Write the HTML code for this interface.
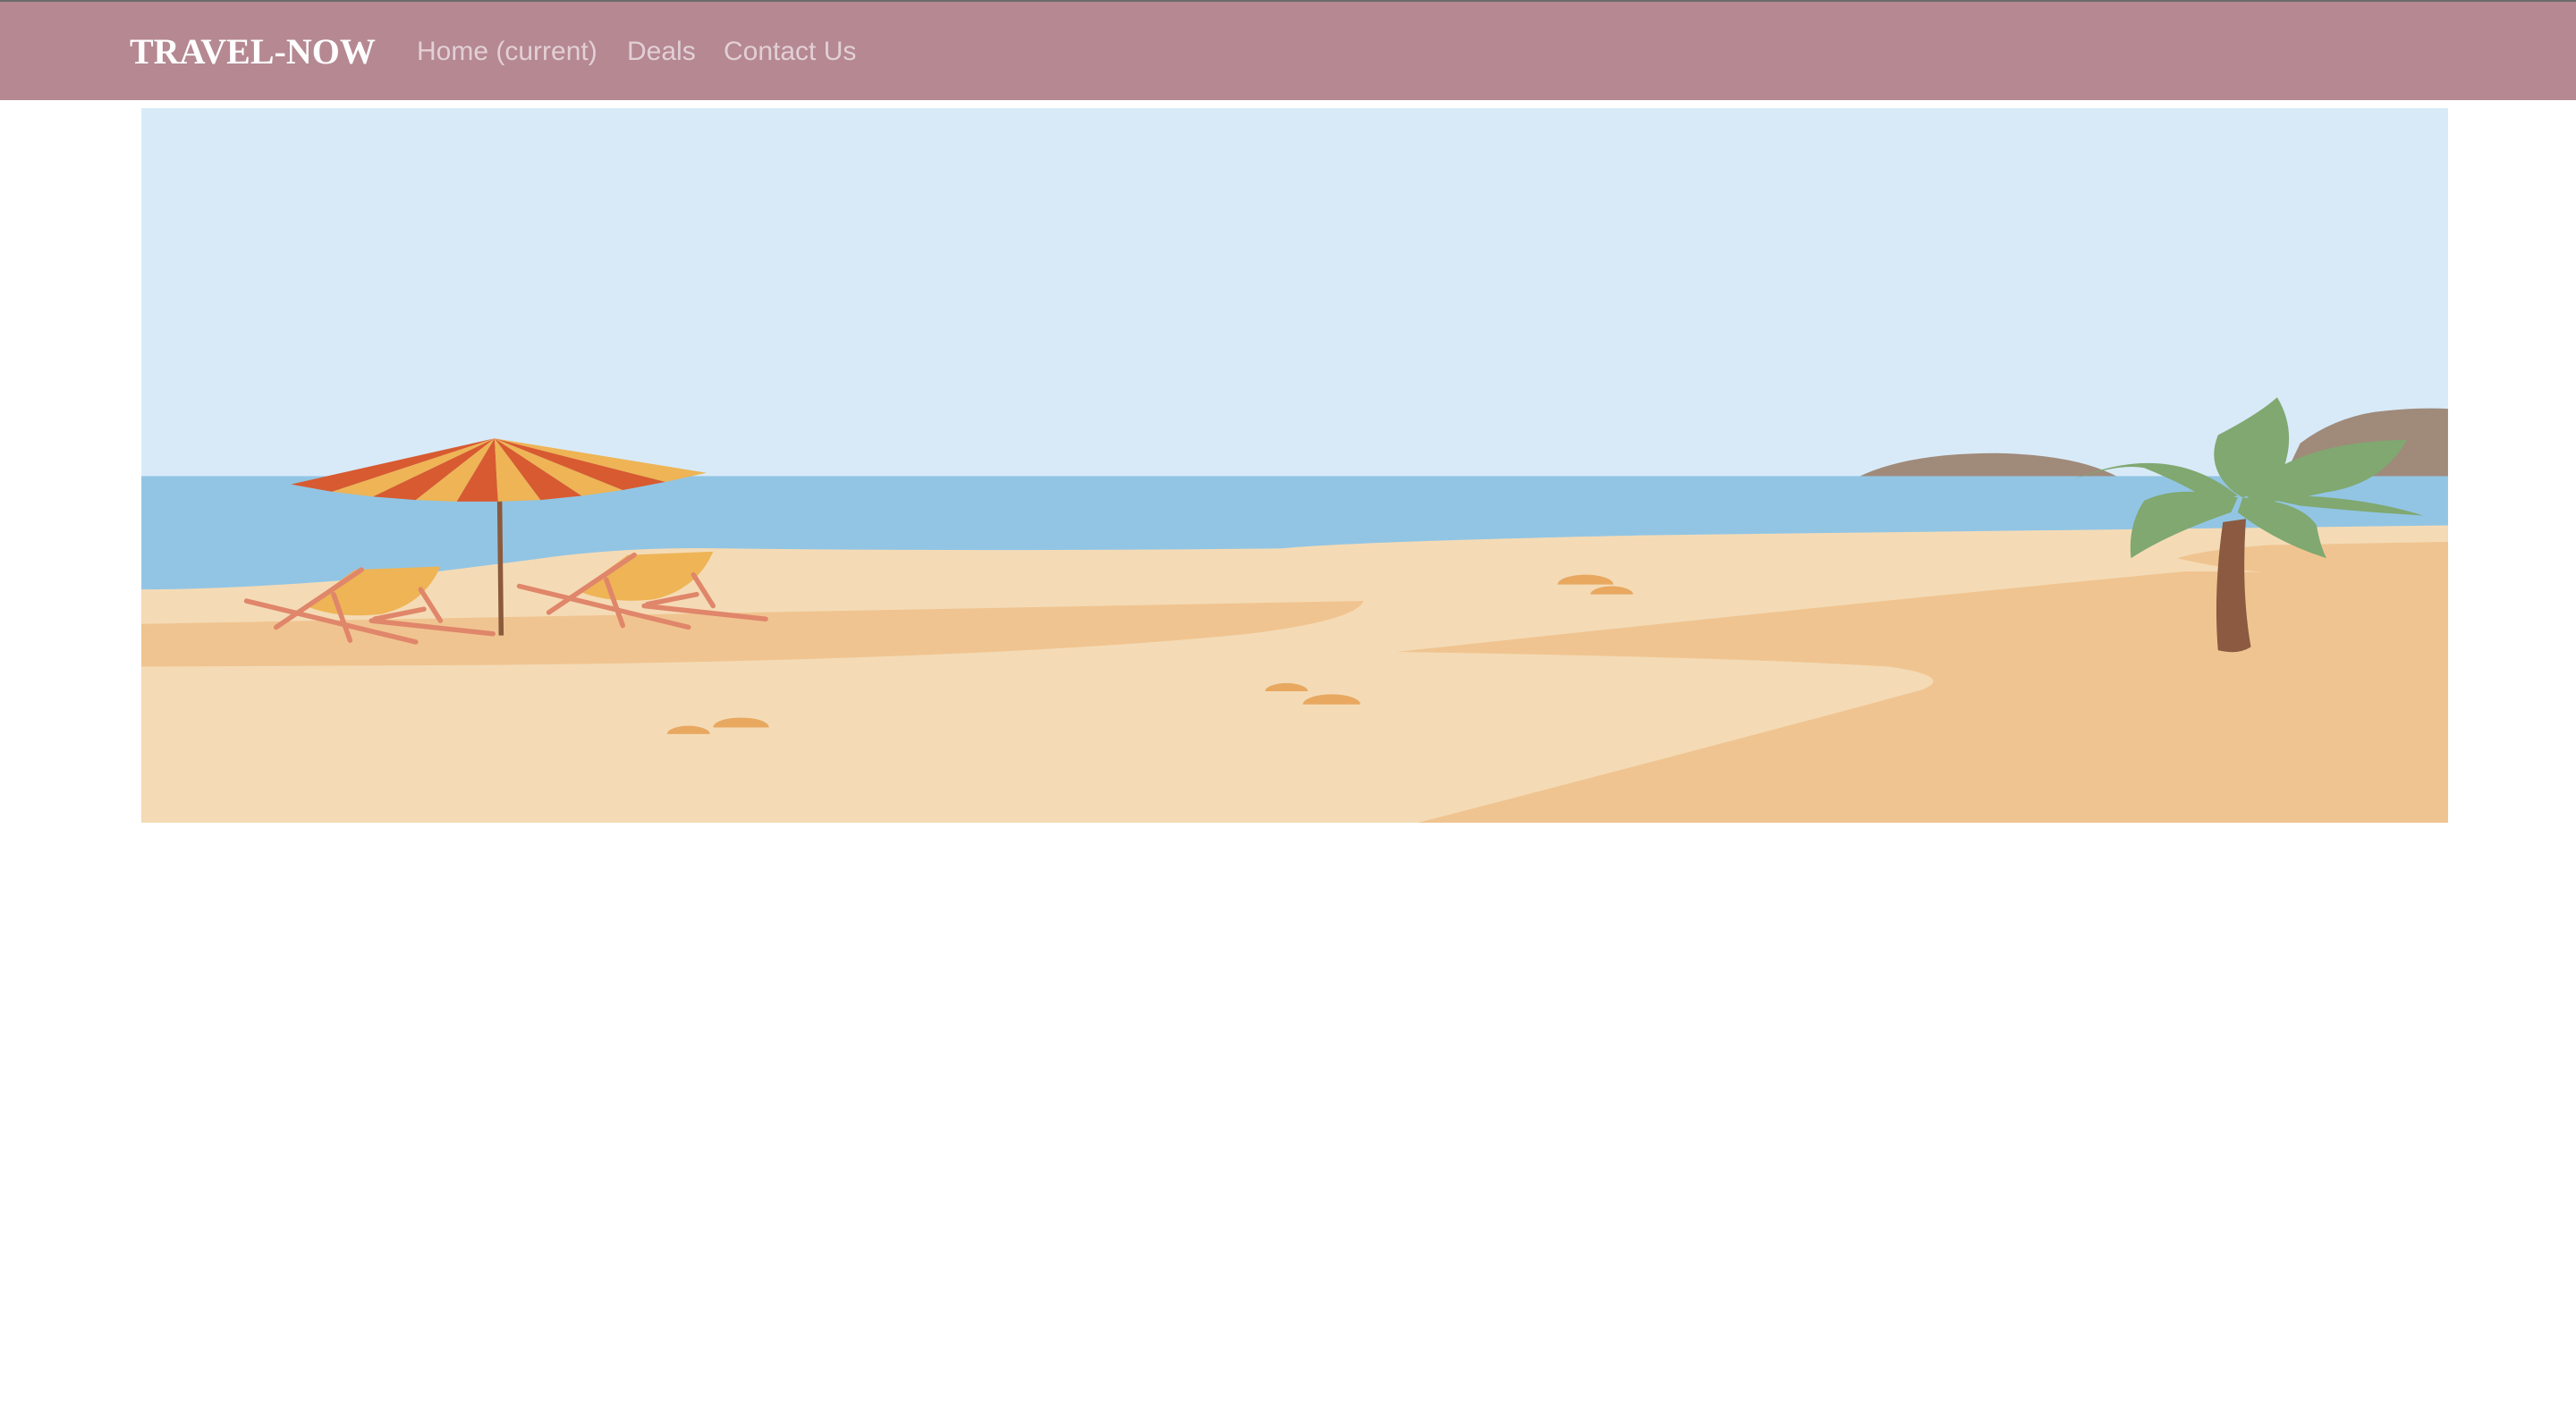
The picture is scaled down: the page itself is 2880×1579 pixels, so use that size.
<!DOCTYPE html>
<html><head><meta charset="utf-8"><style>
html,body{margin:0;padding:0;background:#fff;width:2880px;height:1579px;overflow:hidden}
.nav{position:absolute;left:0;top:0;width:2880px;height:112px;background:#b58892;border-top:2px solid #6b6b6b;box-sizing:border-box}
.brand{position:absolute;left:145px;top:28px;font:bold 40px "Liberation Serif",serif;color:#fff;line-height:56px}
.l{position:absolute;top:28px;font:30px "Liberation Sans",sans-serif;color:#e2d0d5;line-height:56px}
svg{position:absolute;left:158px;top:121px}
</style></head><body>
<div class="nav"><div class="brand">TRAVEL-NOW</div>
<div class="l" style="left:466px">Home (current)</div>
<div class="l" style="left:701px">Deals</div>
<div class="l" style="left:809px">Contact Us</div></div>
<svg width="2579" height="799" viewBox="86 66 1404 435">
<rect x="86" y="66" width="1404" height="435" fill="#d8eaf8"/>
<path d="M1130,291 Q1160,276 1215,276 Q1265,277 1290,291Z M1390,291 L1400,270 Q1420,255 1445,251 Q1470,248 1490,249 L1490,291Z" fill="#a08a7a"/>
<rect x="86" y="290" width="1404" height="211" fill="#92c5e4"/>
<path d="M86,359 Q150,359 250,350 Q300,344 330,340 Q380,333 440,334 Q600,336 780,334 Q820,330 1000,326 L1490,320 L1490,501 L86,501Z" fill="#f4dbb6"/>
<path d="M86,380 L830,366 Q825,378 760,386 Q600,402 300,405 L86,406Z" fill="#f0c490"/>
<path d="M863,501 Q1060,450 1170,420 Q1190,412 1150,406 Q1050,400 850,397 Q1100,370 1330,348 Q1390,348 1395,350 Q1360,348 1325,340 Q1340,335 1380,332 L1490,330 L1490,501Z" fill="#f0c490"/>
<g fill="#e8a860">
<path d="M406,447 A13,5 0 0 1 432,447Z M434,443 A17,6 0 0 1 468,443Z M770,421 A13,5 0 0 1 796,421Z M793,429 A17,6 0 0 1 828,429Z M948,356 A17,6 0 0 1 982,356Z M968,362 A13,5 0 0 1 994,362Z"/>
</g>
<line x1="304" y1="300" x2="305" y2="387" stroke="#8b5a3c" stroke-width="3"/>
<g>
<polygon points="301,267 177,295 202,299.5" fill="#d85a30"/>
<polygon points="301,267 202,299.5 227,302.5" fill="#eeb455"/>
<polygon points="301,267 227,302.5 253,304.5" fill="#d85a30"/>
<polygon points="301,267 253,304.5 278,305.5" fill="#eeb455"/>
<polygon points="301,267 278,305.5 303,305.5" fill="#d85a30"/>
<polygon points="301,267 303,305.5 329,304.5" fill="#eeb455"/>
<polygon points="301,267 329,304.5 354,302" fill="#d85a30"/>
<polygon points="301,267 354,302 379,298.5" fill="#eeb455"/>
<polygon points="301,267 379,298.5 405,293.5" fill="#d85a30"/>
<polygon points="301,267 405,293.5 430,288" fill="#eeb455"/>
</g>
<g id="c1">
<path d="M216,347 L268,345 Q258,368 232,374 Q205,377 186,369Z" fill="#eeb455"/>
<g stroke="#e0866a" stroke-width="3" stroke-linecap="round" fill="none">
<line x1="150" y1="366" x2="253" y2="391"/>
<line x1="168" y1="382" x2="220" y2="347"/>
<line x1="203" y1="362" x2="213" y2="390"/>
<line x1="256" y1="359" x2="268" y2="378"/>
<line x1="226" y1="378" x2="300" y2="386"/>
<line x1="228" y1="377" x2="258" y2="371"/>
</g></g>
<use href="#c1" transform="translate(166,-9)"/>
<path d="M1350,396 Q1347,360 1353,318 L1367,316 Q1364,360 1370,394 Q1362,399 1350,396Z" fill="#8b5a40"/>
<g fill="#80a870">
<path d="M1362,302 Q1320,268 1262,292 Q1290,282 1305,285 Q1330,295 1345,305Z"/>
<path d="M1360,300 Q1342,285 1350,265 Q1375,252 1386,242 Q1398,262 1390,285 Q1380,298 1365,303Z"/>
<path d="M1365,300 Q1400,268 1465,268 Q1450,295 1415,300 Q1390,306 1372,306Z"/>
<path d="M1372,302 Q1430,300 1475,314 Q1440,312 1400,308Z"/>
<path d="M1365,303 Q1400,305 1410,320 Q1412,332 1416,340 Q1385,330 1362,312Z"/>
<path d="M1362,303 Q1325,295 1305,305 Q1295,320 1297,340 Q1320,325 1358,312Z"/>
</g>
</svg>
</body></html>
